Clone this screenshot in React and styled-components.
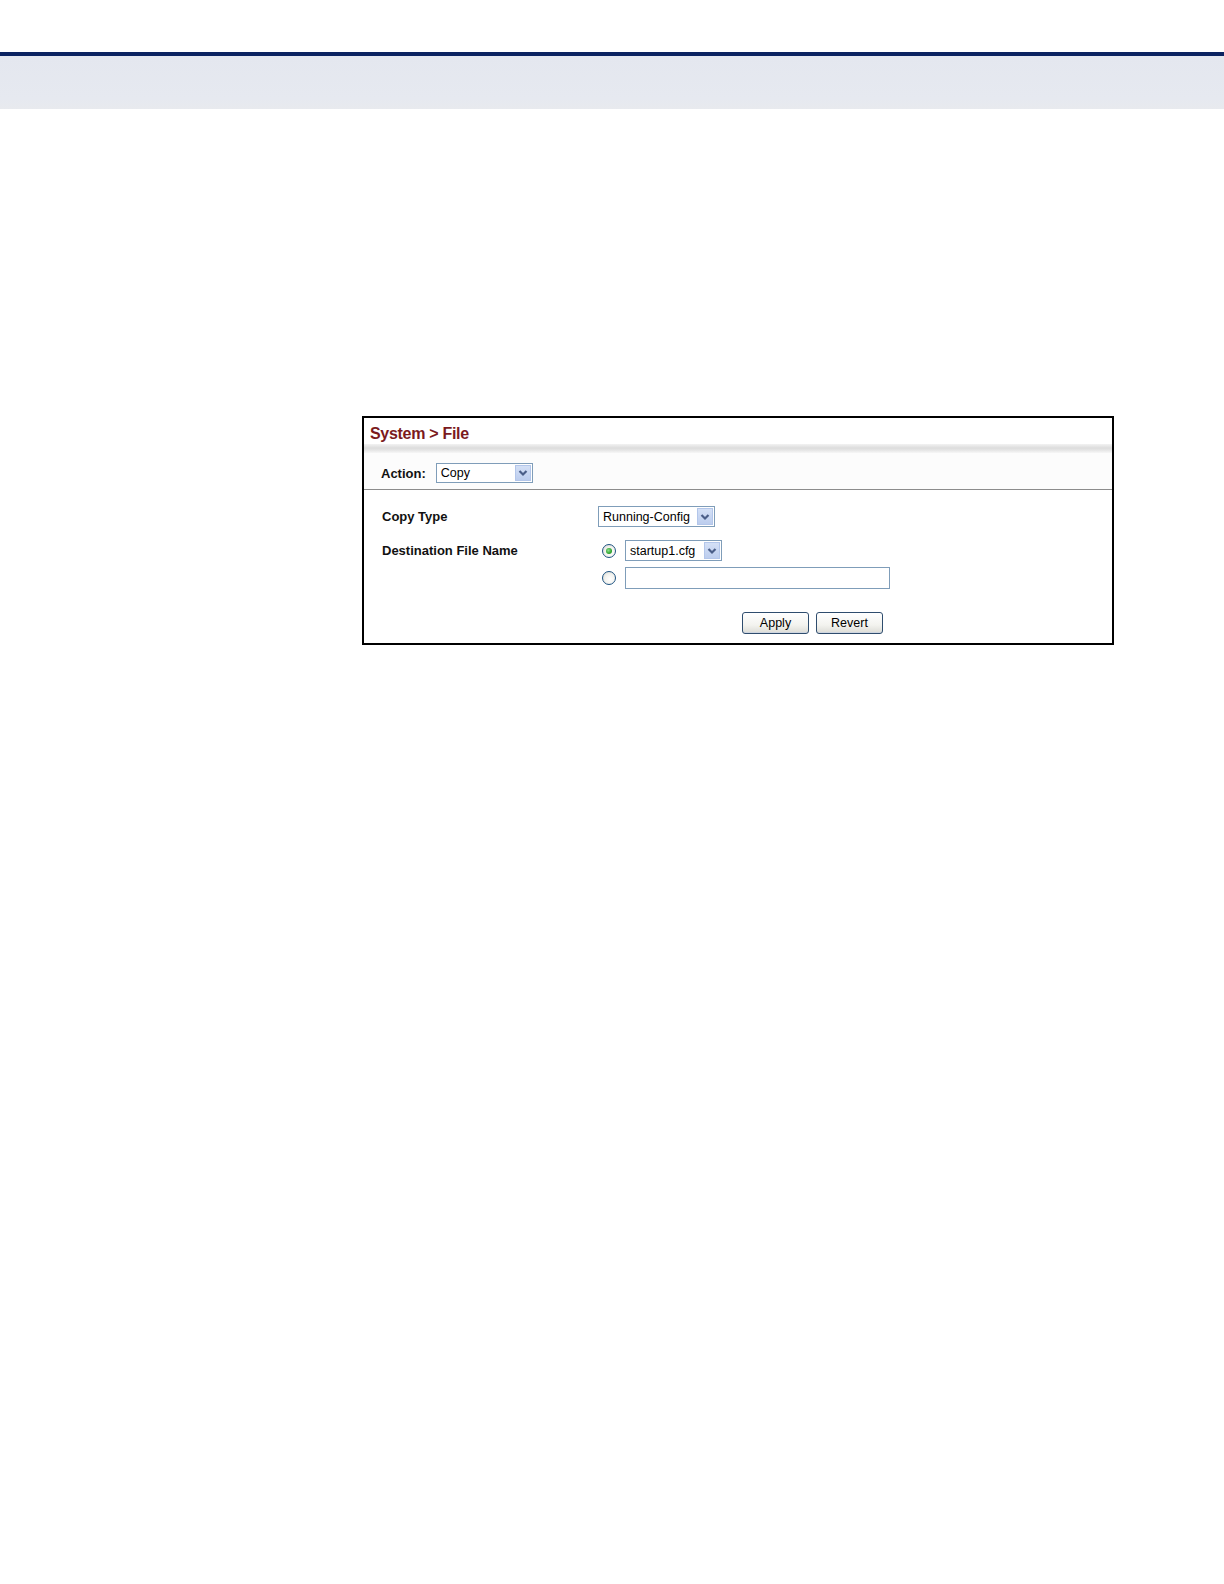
import React from 'react';
import styled, { createGlobalStyle } from 'styled-components';

const GlobalStyle = createGlobalStyle`
  html, body {
    margin: 0;
    padding: 0;
    background: #ffffff;
  }
  body {
    font-family: "Liberation Sans", Arial, sans-serif;
    color: #000;
  }
`;

const Page = styled.div`
  width: 1224px;
  min-height: 1584px;
  padding-top: 52px;
  box-sizing: border-box;
`;

const HeaderBand = styled.div`
  height: 53px;
  border-top: 4px solid #0b2361;
  background: linear-gradient(to bottom, #e4e7ef 0%, #e6e9f0 80%, #e8eaee 100%);
`;

const Content = styled.div`
  padding: 307px 0 0 362px;
`;

const Panel = styled.div`
  width: 752px;
  height: 229px;
  border: 2px solid #000;
  box-sizing: border-box;
  display: flex;
  flex-direction: column;
`;

const TitleBar = styled.div`
  height: 26px;
  padding-left: 6px;
  display: flex;
  align-items: flex-end;
  padding-bottom: 1px;
  box-sizing: border-box;
  font-size: 16px;
  font-weight: bold;
  color: #7b1a1d;
  letter-spacing: -0.3px;
`;

const TitleRule = styled.div`
  height: 9px;
  background: linear-gradient(to bottom, #f2f2f2 0%, #dcdcdc 45%, #e6e6e6 70%, #f7f7f7 100%);
`;

const ActionRow = styled.div`
  height: 37px;
  padding: 0 0 0 17px;
  display: flex;
  align-items: center;
  gap: 10px;
  padding-top: 4px;
  box-sizing: border-box;
  border-bottom: 1px solid #8c8c8c;
  background: #fcfcfc;
`;

const Label = styled.span`
  font-size: 13px;
  font-weight: bold;
  color: #111;
  white-space: nowrap;
`;

const FormArea = styled.div`
  padding: 16px 0 0 18px;
  display: grid;
  grid-template-columns: 216px 1fr;
  row-gap: 13px;
  align-items: start;
`;

const FieldLabel = styled(Label)`
  line-height: 21px;
`;

const ValueStack = styled.div`
  display: flex;
  flex-direction: column;
  gap: 6px;
`;

const RadioLine = styled.div`
  display: flex;
  align-items: center;
  gap: 9px;
  padding-left: 4px;
`;

const SelectBox = styled.div`
  width: ${(p) => p.$width}px;
  height: ${(p) => p.$height || 21}px;
  border: 1px solid #7f9db9;
  background: #fff;
  box-sizing: border-box;
  display: flex;
  align-items: center;
  justify-content: space-between;
  padding: 1px 1px 1px 4px;
  font-size: 12.5px;
  color: #000;
`;

const ArrowButton = styled.span`
  width: 16px;
  height: 100%;
  background: linear-gradient(to bottom, #d4e0f6 0%, #bccdee 100%);
  border: 1px solid #b3c6ea;
  box-sizing: border-box;
  display: flex;
  align-items: center;
  justify-content: center;
`;

const Radio = styled.span`
  width: 14px;
  height: 14px;
  border-radius: 50%;
  border: 1px solid #1d5281;
  background: radial-gradient(circle at 60% 60%, #ffffff 0%, #f2f2ee 50%, #d5d5cd 100%);
  box-sizing: border-box;
  display: flex;
  align-items: center;
  justify-content: center;
  flex-shrink: 0;

  &::after {
    content: '';
    width: 6px;
    height: 6px;
    border-radius: 50%;
    background: radial-gradient(circle at 40% 40%, #8ee08e 0%, #2fa52f 60%, #1f8a1f 100%);
    display: ${(p) => (p.$checked ? 'block' : 'none')};
  }
`;

const TextInput = styled.input`
  width: 265px;
  height: 22px;
  border: 1px solid #7f9db9;
  box-sizing: border-box;
  padding: 0 4px;
  font-family: inherit;
  font-size: 12px;
  outline: none;
`;

const ButtonRow = styled.div`
  grid-column: 2;
  display: flex;
  gap: 7px;
  padding-left: 144px;
  margin-top: 10px;
`;

const Button = styled.button`
  width: 67px;
  height: 22px;
  border: 1px solid #2f4d6e;
  border-radius: 3px;
  background: linear-gradient(to bottom, #ffffff 0%, #f3f3ef 60%, #dcdcd6 100%);
  font-family: inherit;
  font-size: 12.5px;
  color: #000;
  padding: 0;
  box-shadow: inset 0 -1px 0 #cfd6e0;
`;

const Chevron = () => (
  <svg width="10" height="8" viewBox="0 0 10 8">
    <path d="M1.5 2 L5 5.5 L8.5 2" fill="none" stroke="#4a5e88" strokeWidth="2.2" />
  </svg>
);

const Select = ({ value, width, height }) => (
  <SelectBox $width={width} $height={height}>
    <span>{value}</span>
    <ArrowButton>
      <Chevron />
    </ArrowButton>
  </SelectBox>
);

const App = () => (
  <>
    <GlobalStyle />
    <Page>
      <HeaderBand />
      <Content>
        <Panel>
          <TitleBar>System &gt; File</TitleBar>
          <TitleRule />
          <ActionRow>
            <Label>Action:</Label>
            <Select value="Copy" width={97} height={20} />
          </ActionRow>
          <FormArea>
            <FieldLabel>Copy Type</FieldLabel>
            <Select value="Running-Config" width={117} />
            <FieldLabel>Destination File Name</FieldLabel>
            <ValueStack>
              <RadioLine>
                <Radio $checked />
                <Select value="startup1.cfg" width={97} />
              </RadioLine>
              <RadioLine>
                <Radio />
                <TextInput type="text" />
              </RadioLine>
            </ValueStack>
            <ButtonRow>
              <Button>Apply</Button>
              <Button>Revert</Button>
            </ButtonRow>
          </FormArea>
        </Panel>
      </Content>
    </Page>
  </>
);

export default App;
